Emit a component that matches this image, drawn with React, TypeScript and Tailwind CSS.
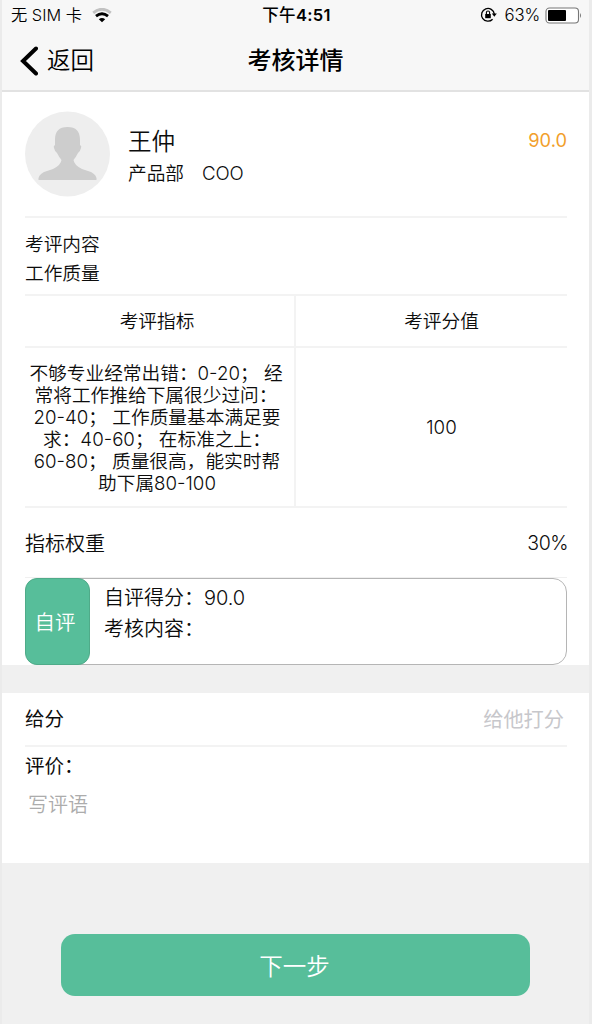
const criteria = [
  { text: '不够专业经常出错：0-20； 经', style: 'pr-[7px]' },
  { text: '常将工作推给下属很少过问：', style: 'pr-[7px]' },
  { text: '20-40； 工作质量基本满足要', style: 'pr-[5px]' },
  { text: '求：40-60； 在标准之上：', style: 'pr-[5px]' },
  { text: '60-80； 质量很高，能实时帮', style: 'pr-[5px]' },
  { text: '助下属80-100', style: 'pr-[5px]' },
];

function StatusBar() {
  return (
    <div className="flex h-[30px] items-center text-[17px] leading-[30px]">
      <div className="flex w-[200px] items-center pl-[9px]">
        <span className="text-[16.300px] whitespace-pre">无 SIM 卡</span>
        <svg className="ml-[10px] h-[15px] w-[20px]" viewBox="0 0 20 15">
          <path d="M1.2 4.8Q10-2.3 18.8 4.8" fill="none" stroke="#c2c2c2" strokeWidth="2.8" />
          <path d="M4 8.2Q10 3.2 16 8.2" fill="none" stroke="#000" strokeWidth="2.8" />
          <path d="M6.8 11.2Q10 8.6 13.2 11.2L10 14.2Z" fill="#000" />
        </svg>
      </div>
      <div className="flex-1 pl-[2px] text-center text-[16.500px] font-medium tracking-[0.3px]">
        下午<span className="font-semibold">4:51</span>
      </div>
      <div className="flex w-[200px] items-center justify-end pr-[7px]">
        <svg className="mr-[8px] h-[16px] w-[17px]" viewBox="0 0 17 16" fill="none" stroke="#000">
          <path d="M14.300 7A6.400 6.400 0 1 0 12.600 12.200" strokeWidth="1.3" />
          <path d="M11.800 6.500h5l-2.500 3.200Z" fill="#000" stroke="none" />
          <path d="M5.200 7h5.600v4.200H5.200Z" fill="#000" stroke="none" />
          <path d="M6.400 7V5.600a1.600 1.600 0 0 1 3.200 0V7" strokeWidth="1.1" />
        </svg>
        <span className="text-[16.800px] tracking-[-0.2px]">63%</span>
        <svg className="ml-[5px] h-[17px] w-[37px]" viewBox="0 0 37 17">
          <rect x="1" y="1" width="32.500" height="15" rx="3.500" fill="#fff" stroke="#777" strokeWidth="1.1" />
          <rect x="3" y="3" width="18" height="11" rx="1" fill="#000" />
          <path d="M35 6q2 2.500 0 5Z" fill="#777" />
        </svg>
      </div>
    </div>
  );
}

function NavBar() {
  return (
    <div className="flex h-[61px] items-center text-[23.500px]">
      <div className="flex w-[200px] items-center pl-[17px]">
        <svg className="h-[30px] w-[19px]" viewBox="0 0 19 30" fill="none" stroke="#000" strokeWidth="4" strokeLinecap="round">
          <path d="M17 2.500L4 15L17 27.500" />
        </svg>
        <span className="ml-[9px]">返回</span>
      </div>
      <h1 className="flex-1 text-center text-[24px] font-medium whitespace-nowrap">考核详情</h1>
      <div className="w-[200px]" />
    </div>
  );
}

function Avatar() {
  return (
    <svg className="h-[86px] w-[86px]" viewBox="0 0 86 86">
      <circle cx="42.500" cy="43" r="42.500" fill="#eeeeee" />
      <path
        d="M30 29C30 20 34 16 42.500 16S55 20 55 29V34Q57 35 56 37Q55 41 53 42Q51 46 48.500 49Q49 54 57 58L66 61Q72 64 71.500 69H13.500Q13 64 19 61L28 58Q36 54 36.500 49Q34 46 32 42Q30 41 29 37Q28 35 30 34Z"
        fill="#cdcdcd"
      />
    </svg>
  );
}

function Profile() {
  return (
    <div className="flex h-[126px] border-b-2 border-[#f3f3f3] pt-[19px]">
      <Avatar />
      <div className="ml-[17px] pt-[13px]">
        <div className="text-[23.500px] leading-[36px]">王仲</div>
        <div className="text-[18.700px] leading-[28px]">
          <span>产品部</span>
          <span className="ml-[18px] tracking-[-0.2px]">COO</span>
        </div>
      </div>
      <div className="ml-auto pt-[15px] text-[18.300px] leading-[29px] font-normal text-[#f29f2c]">90.0</div>
    </div>
  );
}

function Criteria() {
  return (
    <div className="grid grid-cols-2 border-b-2 border-[#f3f3f3] text-center text-[18.700px]">
      <div className="h-[52px] border-r-2 border-b-2 border-[#f3f3f3] pr-[5px] leading-[52px]">考评指标</div>
      <div className="h-[52px] border-b-2 border-[#f3f3f3] pl-[20px] leading-[52px]">考评分值</div>
      <div className="h-[158px] border-r-2 border-[#f3f3f3] pt-[15px]">
        {criteria.map((line) => (
          <div key={line.text} className={`text-[18.700px] leading-[22px] whitespace-nowrap ${line.style}`}>
            {line.text}
          </div>
        ))}
      </div>
      <div className="h-[158px] pl-[20px] leading-[160px]">100</div>
    </div>
  );
}

function SelfReview() {
  return (
    <div className="flex h-[87px] rounded-[14px] border border-[#b5b5b5]">
      <div className="-my-px -ml-px flex w-[65px] items-center justify-center rounded-[12px] border border-[#4fab89] bg-[#57be9a] pt-[3px] pr-[5px] text-[20.500px] text-white">
        自评
      </div>
      <div className="ml-[14px] pt-[4px] text-[20px] leading-[31px]">
        <div>
          自评得分：<span className="tracking-[-0.1px]">90.0</span>
        </div>
        <div>考核内容：</div>
      </div>
    </div>
  );
}

export default function App() {
  return (
    <div
      lang="zh-CN"
      className="h-[1024px] w-[592px] border-r-[3px] border-l-2 border-[#ebebeb] bg-[#f0f0f0] font-['Inter','Noto_Sans_CJK_SC',sans-serif] font-[350] text-[#0c0c0c]"
    >
      <header className="h-[92px] border-b-2 border-[#e2e2e2] bg-[#f7f7f7] text-black">
        <StatusBar />
        <NavBar />
      </header>
      <section className="h-[573px] bg-white pr-[22px] pl-[23px]">
        <Profile />
        <div className="h-[78px] border-b-2 border-[#f3f3f3] pt-[12px] text-[18.700px] leading-[29px]">
          <div>考评内容</div>
          <div>工作质量</div>
        </div>
        <Criteria />
        <div className="flex h-[70px] items-center justify-between border-b border-[#f0f0f0] pt-[2px] text-[20px]">
          <span>指标权重</span>
          <span className="-mr-px text-[19.500px] tracking-[-0.5px]">30%</span>
        </div>
        <SelfReview />
      </section>
      <section className="mt-[28px] h-[170px] bg-white pr-[22px] pl-[23px]">
        <div className="flex h-[54px] items-center justify-between border-b-2 border-[#f3f3f3] pt-[2px] text-[19.500px] font-normal">
          <span>给分</span>
          <span className="pr-[3px] text-[20.200px] text-[#c7c7cb]">给他打分</span>
        </div>
        <div className="text-[19.500px] leading-[39px] font-normal">评价：</div>
        <div className="pl-[3px] text-[20px] leading-[38px] text-[#acacac]">写评语</div>
      </section>
      <button className="mt-[71px] ml-[59px] flex h-[62px] w-[469px] items-center justify-center rounded-[14px] bg-[#57be9a] pt-[3px] pr-[2px] text-[23.500px] text-white">
        下一步
      </button>
    </div>
  );
}
